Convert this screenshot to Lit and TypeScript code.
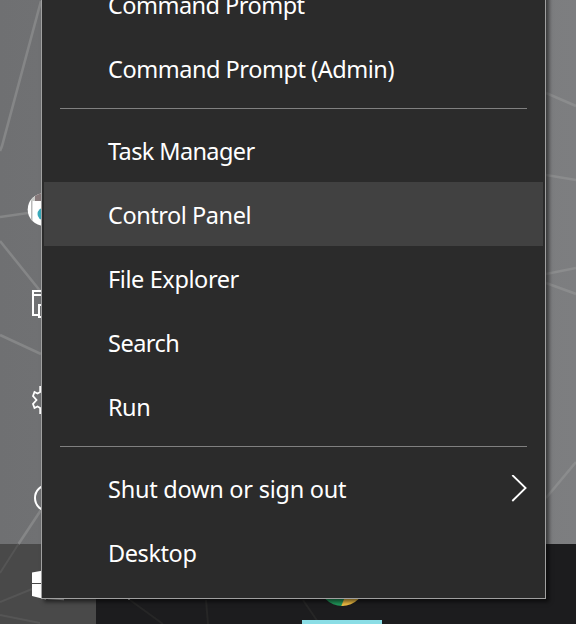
import { LitElement, html, svg, css } from "lit";
import { customElement, property } from "lit/decorators.js";
import { classMap } from "lit/directives/class-map.js";
import { styleMap } from "lit/directives/style-map.js";

interface Entry {
  label: string;
  spacing: number;
  active?: boolean;
  submenu?: boolean;
}

const groups: Entry[][] = [
  [
    { label: "Command Prompt", spacing: -0.52 },
    { label: "Command Prompt (Admin)", spacing: -0.46 },
  ],
  [
    { label: "Task Manager", spacing: -0.62 },
    { label: "Control Panel", spacing: -0.45, active: true },
    { label: "File Explorer", spacing: -0.4 },
    { label: "Search", spacing: -0.5 },
    { label: "Run", spacing: -0.5 },
  ],
  [
    { label: "Shut down or sign out", spacing: -0.25, submenu: true },
    { label: "Desktop", spacing: -0.42 },
  ],
];

@customElement("power-menu")
export class PowerMenu extends LitElement {
  @property({ attribute: false }) groups: Entry[][] = [];

  static styles = css`
    :host {
      display: flex;
      flex-direction: column;
      justify-content: flex-end;
      box-sizing: border-box;
      width: 505px;
      height: 627px;
      padding: 0 2px 14px;
      border: 1px solid #a0a0a0;
      background: #2b2b2b;
      box-shadow: 3px 3px 4px rgba(0, 0, 0, 0.55);
    }
    .item {
      display: flex;
      align-items: center;
      justify-content: space-between;
      box-sizing: border-box;
      height: 64px;
      flex: none;
      padding: 2px 16px 0 64px;
      color: #fff;
      font: 23.5px/62px "Noto Sans", sans-serif;
      white-space: nowrap;
    }
    .active {
      background: #414141;
    }
    .rule {
      height: 1px;
      flex: none;
      margin: 8px 16px 9px;
      background: #808080;
    }
    .chevron {
      width: 16px;
      height: 28px;
    }
  `;

  render() {
    return this.groups.map(
      (group, i) => html`
        ${i ? html`<div class="rule"></div>` : null}
        ${group.map(
          (e) => html`<div class=${classMap({ item: true, active: !!e.active })}>
            <span style=${styleMap({ letterSpacing: `${e.spacing}px` })}>${e.label}</span>
            ${e.submenu
              ? html`<svg class="chevron" viewBox="0 0 16 28">
                  <path d="M1.300 0L14.600 13L1.300 26" fill="none" stroke="#fff" stroke-width="1.800" />
                </svg>`
              : null}
          </div>`
        )}
      `
    );
  }
}

@customElement("app-root")
export class AppRoot extends LitElement {
  static styles = css`
    :host {
      display: block;
      position: relative;
      width: 576px;
      height: 624px;
      overflow: hidden;
      background: #727375;
    }
    .scene {
      display: block;
      width: 576px;
      height: 624px;
    }
    .menu {
      position: absolute;
      left: 41px;
      bottom: 25px;
    }
  `;

  private wallpaper() {
    return svg`
      <defs>
        <linearGradient id="wall" x1="0" y1="0" x2="1" y2="0">
          <stop offset="0" stop-color="#6f7072" />
          <stop offset="1" stop-color="#7d7e80" />
        </linearGradient>
        <clipPath id="face"><circle cx="44" cy="209.5" r="16.3" /></clipPath>
        <clipPath id="ball"><circle cx="342" cy="583" r="23" /></clipPath>
      </defs>
      <rect width="576" height="544" fill="url(#wall)" />
      <rect y="544" width="96" height="80" fill="#494949" />
      <rect x="96" y="544" width="480" height="80" fill="#1c1c1e" />
      <g fill="none" stroke="#858687" stroke-width="2.600">
        <path d="M41 1L2 146L0 151M0 217L28 213M0 241L41 292M0 335L41 354M41 510L18.500 544" />
        <path d="M546 93L576 106M546 175L576 180M546 274L576 268M546 283L576 294M546 498L576 462" stroke="#8b8c8d" />
      </g>
      <g fill="none" stroke="#555" stroke-width="2">
        <path d="M18.500 544L0 573M0 602L32 589M0 615L40 623" />
      </g>
      <g fill="none" stroke="#262626" stroke-width="2">
        <path d="M130 600L163 624M206 600L208 624M303 600L318 622" />
      </g>`;
  }

  private rail() {
    return svg`
      <g clip-path="url(#face)">
        <rect x="26" y="190" width="20" height="40" fill="#fff" />
        <rect x="31" y="200" width="1.500" height="26" fill="#b9b9b9" />
        <path d="M29 201L35 192V201Z" fill="#c9cbc8" />
        <rect x="35" y="190" width="10" height="11" fill="#86797a" />
        <circle cx="44" cy="214" r="6.500" fill="#3aaabb" />
      </g>
      <g fill="none" stroke="#fff" stroke-width="2">
        <path d="M41 291H33V315H39M33 295H41M41 305H39V317H41" />
        <path d="M40.200 386V392L37.500 393.500L34.500 392L33 396L36.500 400L33 404L34.500 408L37.500 406.500L40.200 408V414" stroke-width="1.800" />
        <circle cx="48" cy="498" r="13" />
      </g>
      <path d="M32 572.500L46 570V583H32ZM32 584H46V599.500L32 596Z" fill="#fff" />
      <path d="M48 584H64V600.200L48 599.200Z" fill="#bbb" />
      <rect x="128" y="598" width="2" height="2" fill="#999" />`;
  }

  private chrome() {
    return svg`
      <g clip-path="url(#ball)">
        <rect x="318" y="590" width="26" height="18" fill="#20965a" />
        <path d="M344.500 598L340.500 608H368V598Z" fill="#efbd43" />
      </g>
      <rect x="302" y="620" width="80" height="4" fill="#8adde5" />`;
  }

  render() {
    return html`
      <svg class="scene" viewBox="0 0 576 624">${this.wallpaper()}${this.rail()}${this.chrome()}</svg>
      <power-menu class="menu" .groups=${groups}></power-menu>
    `;
  }
}
